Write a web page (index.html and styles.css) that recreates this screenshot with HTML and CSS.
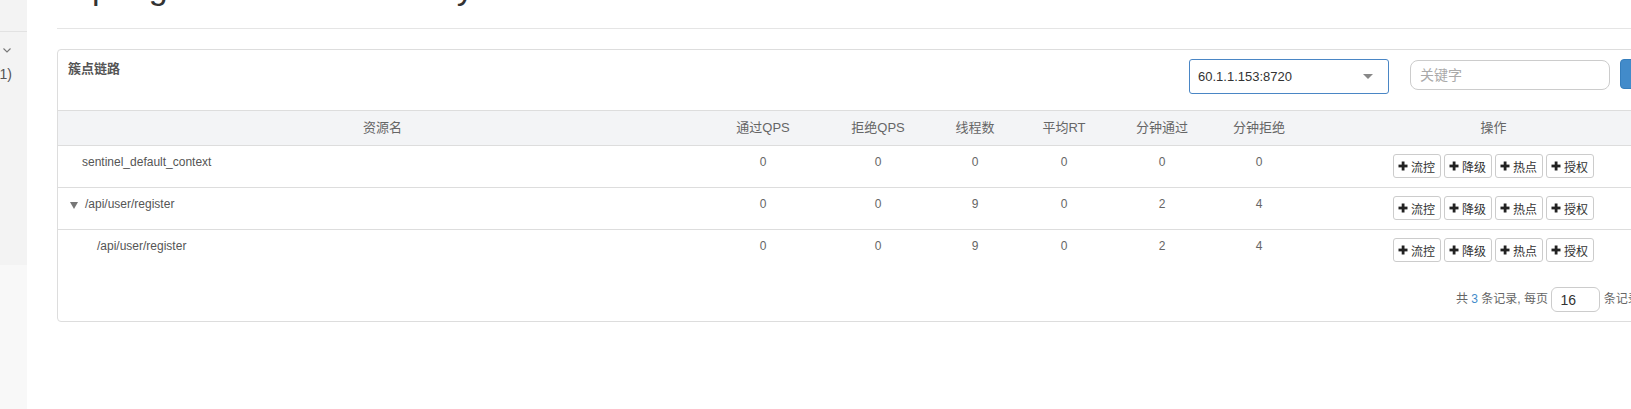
FILE: index.html
```html
<!DOCTYPE html>
<html lang="zh-CN">
<head>
<meta charset="utf-8">
<title>簇点链路</title>
<link rel="stylesheet" href="styles.css">
</head>
<body>
<div class="layout">
  <aside class="sidebar">
    <div class="side-top"></div>
    <div class="side-nav">
      <div class="side-app">
        <span class="side-name">spring-cloud-alibaba-study</span>
        <svg class="chev" width="8" height="5" viewBox="0 0 8 5"><path d="M0.5 0.5 L4 4 L7.5 0.5" fill="none" stroke="#777" stroke-width="1.1"/></svg>
      </div>
      <div class="side-count">(1/1)</div>
    </div>
    <div class="side-rest"></div>
  </aside>

  <main class="main">
    <div class="page-head">
      <h1 class="app-title">spring-cloud-alibaba-study</h1>
    </div>

    <section class="panel">
      <div class="panel-heading">
        <span class="panel-title">簇点链路</span>
        <div class="machine-select">
          <span class="machine-value">60.1.1.153:8720</span>
          <span class="caret"></span>
        </div>
        <input class="search-input" type="text" placeholder="关键字">
        <button class="btn-primary" type="button">刷新</button>
      </div>

      <table class="res-table">
        <colgroup>
          <col class="c-name">
          <col class="c-pass">
          <col class="c-block">
          <col class="c-thread">
          <col class="c-rt">
          <col class="c-mpass">
          <col class="c-mblock">
          <col class="c-op">
        </colgroup>
        <thead>
          <tr>
            <th>资源名</th>
            <th>通过QPS</th>
            <th>拒绝QPS</th>
            <th>线程数</th>
            <th>平均RT</th>
            <th>分钟通过</th>
            <th>分钟拒绝</th>
            <th>操作</th>
          </tr>
        </thead>
        <tbody>
          <tr>
            <td class="name"><span class="indent-root"></span>sentinel_default_context</td>
            <td>0</td><td>0</td><td>0</td><td>0</td><td>0</td><td>0</td>
            <td class="ops">
              <div class="op-group">
                <button class="op-btn" type="button"><svg class="plus" width="10" height="10" viewBox="0 0 10 10"><rect x="3.7" y="0.5" width="2.8" height="9" fill="#222"/><rect x="0.5" y="3.6" width="9" height="2.8" fill="#222"/></svg>流控</button>
                <button class="op-btn" type="button"><svg class="plus" width="10" height="10" viewBox="0 0 10 10"><rect x="3.7" y="0.5" width="2.8" height="9" fill="#222"/><rect x="0.5" y="3.6" width="9" height="2.8" fill="#222"/></svg>降级</button>
                <button class="op-btn" type="button"><svg class="plus" width="10" height="10" viewBox="0 0 10 10"><rect x="3.7" y="0.5" width="2.8" height="9" fill="#222"/><rect x="0.5" y="3.6" width="9" height="2.8" fill="#222"/></svg>热点</button>
                <button class="op-btn" type="button"><svg class="plus" width="10" height="10" viewBox="0 0 10 10"><rect x="3.7" y="0.5" width="2.8" height="9" fill="#222"/><rect x="0.5" y="3.6" width="9" height="2.8" fill="#222"/></svg>授权</button>
              </div>
            </td>
          </tr>
          <tr>
            <td class="name"><span class="tree-toggle"></span>/api/user/register</td>
            <td>0</td><td>0</td><td>9</td><td>0</td><td>2</td><td>4</td>
            <td class="ops">
              <div class="op-group">
                <button class="op-btn" type="button"><svg class="plus" width="10" height="10" viewBox="0 0 10 10"><rect x="3.7" y="0.5" width="2.8" height="9" fill="#222"/><rect x="0.5" y="3.6" width="9" height="2.8" fill="#222"/></svg>流控</button>
                <button class="op-btn" type="button"><svg class="plus" width="10" height="10" viewBox="0 0 10 10"><rect x="3.7" y="0.5" width="2.8" height="9" fill="#222"/><rect x="0.5" y="3.6" width="9" height="2.8" fill="#222"/></svg>降级</button>
                <button class="op-btn" type="button"><svg class="plus" width="10" height="10" viewBox="0 0 10 10"><rect x="3.7" y="0.5" width="2.8" height="9" fill="#222"/><rect x="0.5" y="3.6" width="9" height="2.8" fill="#222"/></svg>热点</button>
                <button class="op-btn" type="button"><svg class="plus" width="10" height="10" viewBox="0 0 10 10"><rect x="3.7" y="0.5" width="2.8" height="9" fill="#222"/><rect x="0.5" y="3.6" width="9" height="2.8" fill="#222"/></svg>授权</button>
              </div>
            </td>
          </tr>
          <tr>
            <td class="name"><span class="indent-child"></span>/api/user/register</td>
            <td>0</td><td>0</td><td>9</td><td>0</td><td>2</td><td>4</td>
            <td class="ops">
              <div class="op-group">
                <button class="op-btn" type="button"><svg class="plus" width="10" height="10" viewBox="0 0 10 10"><rect x="3.7" y="0.5" width="2.8" height="9" fill="#222"/><rect x="0.5" y="3.6" width="9" height="2.8" fill="#222"/></svg>流控</button>
                <button class="op-btn" type="button"><svg class="plus" width="10" height="10" viewBox="0 0 10 10"><rect x="3.7" y="0.5" width="2.8" height="9" fill="#222"/><rect x="0.5" y="3.6" width="9" height="2.8" fill="#222"/></svg>降级</button>
                <button class="op-btn" type="button"><svg class="plus" width="10" height="10" viewBox="0 0 10 10"><rect x="3.7" y="0.5" width="2.8" height="9" fill="#222"/><rect x="0.5" y="3.6" width="9" height="2.8" fill="#222"/></svg>热点</button>
                <button class="op-btn" type="button"><svg class="plus" width="10" height="10" viewBox="0 0 10 10"><rect x="3.7" y="0.5" width="2.8" height="9" fill="#222"/><rect x="0.5" y="3.6" width="9" height="2.8" fill="#222"/></svg>授权</button>
              </div>
            </td>
          </tr>
        </tbody>
      </table>

      <div class="pager">
        <div class="pager-inner">共 <span class="total">3</span> 条记录, 每页 <input class="page-size" type="text" value="16"> 条记录, 第 1 / 1 页</div>
      </div>
    </section>
  </main>
</div>
</body>
</html>
```

FILE: styles.css
```css
html, body {
  margin: 0;
  padding: 0;
  height: 100%;
  overflow: hidden;
  background: #fff;
}

body {
  font-family: "Liberation Sans", "Noto Sans CJK SC", sans-serif;
  color: #555;
}

.layout {
  display: flex;
  min-height: 100%;
}

/* ---------- sidebar ---------- */
.sidebar {
  width: 27px;
  flex: 0 0 27px;
  display: flex;
  flex-direction: column;
  overflow: hidden;
  min-height: 409px;
}

.side-top {
  height: 31px;
  background: #f3f3f3;
  border-bottom: 1px solid #e2e2e2;
}

.side-nav {
  height: 233px;
  background: #f3f3f3;
  padding-top: 8px;
  box-sizing: border-box;
}

.side-app {
  display: flex;
  justify-content: flex-end;
  align-items: center;
  gap: 8px;
  height: 20px;
  padding-right: 16px;
  white-space: nowrap;
  font-size: 14px;
  color: #555;
}

.side-name {
  flex: none;
}

.chev {
  flex: none;
  display: block;
}

.side-count {
  display: flex;
  justify-content: flex-end;
  margin-top: 4px;
  padding-right: 15px;
  height: 20px;
  line-height: 20px;
  font-size: 14px;
  color: #555;
  white-space: nowrap;
}

.side-rest {
  flex: 1;
  background: #f8f8f8;
}

/* ---------- main ---------- */
.main {
  flex: 1;
  padding-left: 30px;
  min-width: 0;
}

.page-head {
  display: flow-root;
  width: 1660px;
  height: 28px;
  border-bottom: 1px solid #e5e5e5;
}

.app-title {
  margin: -30px 0 0 18px;
  font-size: 34px;
  line-height: 34px;
  font-weight: 500;
  color: #333;
  white-space: nowrap;
}

.panel {
  width: 1622px;
  margin-top: 20px;
  border: 1px solid #ddd;
  border-radius: 4px;
  box-sizing: border-box;
  background: #fff;
}

.panel-heading {
  display: flex;
  align-items: flex-start;
  height: 60px;
  padding: 0 10px;
}

.panel-title {
  margin-top: 10px;
  line-height: 18px;
  font-size: 13px;
  font-weight: bold;
  color: #555;
}

.machine-select {
  margin-left: auto;
  margin-top: 9px;
  width: 200px;
  height: 35px;
  box-sizing: border-box;
  border: 1px solid #4a86c5;
  border-radius: 3px;
  display: flex;
  align-items: center;
  padding: 0 15px 0 8px;
  font-size: 13px;
  color: #333;
}

.machine-value {
  flex: 1;
}

.caret {
  width: 0;
  height: 0;
  border-left: 5px solid transparent;
  border-right: 5px solid transparent;
  border-top: 5px solid #888;
}

.search-input {
  margin: 10px 0 0 21px;
  width: 200px;
  height: 30px;
  box-sizing: border-box;
  border: 1px solid #ccc;
  border-radius: 8px;
  padding: 0 9px;
  font-family: "Liberation Sans", "Noto Sans CJK SC", sans-serif;
  font-size: 14px;
  color: #333;
  outline: none;
}

.search-input::placeholder {
  color: #aaa;
}

.btn-primary {
  margin: 9px 0 0 10px;
  width: 48px;
  height: 30px;
  box-sizing: border-box;
  border: 1px solid #357ebd;
  border-radius: 4px;
  background: #428bca;
  color: #fff;
  font-family: "Liberation Sans", "Noto Sans CJK SC", sans-serif;
  font-size: 13px;
  padding: 0 10px;
}

/* ---------- table ---------- */
.res-table {
  width: 100%;
  border-collapse: separate;
  border-spacing: 0;
  table-layout: fixed;
}

.c-name { width: 649px; }
.c-pass { width: 112px; }
.c-block { width: 118px; }
.c-thread { width: 76px; }
.c-rt { width: 102px; }
.c-mpass { width: 94px; }
.c-mblock { width: 100px; }
.c-op { width: 369px; }

.res-table th {
  padding: 0;
  line-height: 34px;
  background: #f3f4f6;
  border-top: 1px solid #ddd;
  border-bottom: 1px solid #ddd;
  font-size: 13px;
  font-weight: normal;
  color: #666;
  text-align: center;
}

.res-table td {
  padding: 8px 0 9px;
  line-height: 17px;
  font-size: 12px;
  color: #666;
  text-align: center;
  vertical-align: top;
  border-bottom: 1px solid #ddd;
}

.res-table tbody tr:last-child td {
  border-bottom: none;
}

.res-table td.name {
  text-align: left;
  padding-left: 12px;
  color: #555;
  white-space: nowrap;
}

.indent-root {
  display: inline-block;
  width: 12px;
}

.indent-child {
  display: inline-block;
  width: 27px;
}

.tree-toggle {
  display: inline-block;
  width: 0;
  height: 0;
  border-left: 4px solid transparent;
  border-right: 4px solid transparent;
  border-top: 7px solid #777;
  margin-right: 7px;
  vertical-align: -1px;
}

.op-group {
  display: flex;
  justify-content: center;
  gap: 3px;
}

.op-btn {
  display: inline-flex;
  align-items: center;
  gap: 3px;
  height: 24px;
  box-sizing: border-box;
  padding: 0 5px 0 4px;
  border: 1px solid #ccc;
  border-radius: 3px;
  background: #fff;
  font-family: "Liberation Sans", "Noto Sans CJK SC", sans-serif;
  font-size: 12px;
  color: #333;
}

.plus {
  display: block;
  flex: none;
}

/* ---------- pager ---------- */
.pager {
  display: flex;
  padding: 16px 0 9px;
}

.pager-inner {
  margin-left: auto;
  width: 222px;
  white-space: nowrap;
  font-size: 12px;
  line-height: 25px;
  color: #666;
}

.total {
  color: #428bca;
}

.page-size {
  display: inline-block;
  vertical-align: top;
  width: 49px;
  height: 25px;
  box-sizing: border-box;
  border: 1px solid #ccc;
  border-radius: 6px;
  padding: 0 8px;
  font-family: "Liberation Sans", sans-serif;
  font-size: 14px;
  color: #333;
  outline: none;
}
```
